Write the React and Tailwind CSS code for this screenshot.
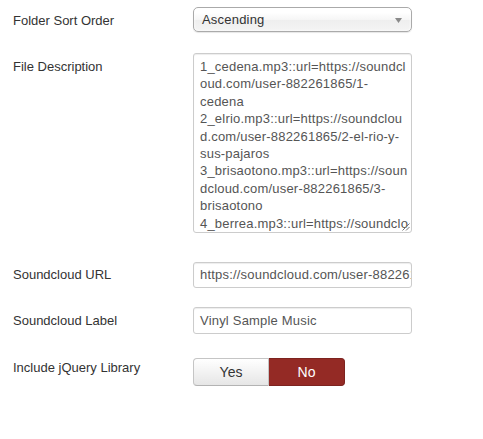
import React from "react";

const lines = [
  "1_cedena.mp3::url=https://soundcl",
  "oud.com/user-882261865/1-",
  "cedena",
  "2_elrio.mp3::url=https://soundclou",
  "d.com/user-882261865/2-el-rio-y-",
  "sus-pajaros",
  "3_brisaotono.mp3::url=https://soun",
  "dcloud.com/user-882261865/3-",
  "brisaotono",
  "4_berrea.mp3::url=https://soundclo",
  "ud.com/user-882261865/4-berrea",
];

function Label({ children, pt }) {
  return (
    <div className={`w-[180px] shrink-0 text-[13px] leading-[18px] text-[#333] ${pt}`}>
      {children}
    </div>
  );
}

export default function App() {
  return (
    <div
      className="w-[483px] h-[439px] bg-white pl-[13px] text-[13px] leading-[18px]"
      style={{ fontFamily: '"Liberation Sans", Arial, sans-serif' }}
    >
      <div className="pt-[7px]">
        {/* Row 1 */}
        <div className="flex">
          <Label pt="pt-[5px]">Folder Sort Order</Label>
          <div className="relative w-[219px] h-[25px] rounded-[5px] border border-[#aaa] bg-[linear-gradient(to_bottom,#ffffff_20%,#f6f6f6_50%,#eeeeee_52%,#f4f4f4_100%)] shadow-[0_1px_1px_rgba(0,0,0,0.1),inset_0_0_3px_#fff] flex items-center pl-[8px] text-[#333] tracking-[0.2px]">
            <span>Ascending</span>
            <svg
              className="absolute right-[9px] top-[10px]"
              width="7"
              height="5"
              viewBox="0 0 7 5"
            >
              <path d="M0 0 L7 0 L3.5 5 Z" fill="#8a8a8a" />
            </svg>
          </div>
        </div>

        {/* Row 2 */}
        <div className="flex mt-[21px]">
          <Label pt="pt-[5px]">File Description</Label>
          <div className="relative w-[219px] h-[180px] overflow-hidden rounded-[3px] border border-[#ccc] shadow-[inset_0_1px_1px_rgba(0,0,0,0.075)] pl-[6px] pt-[4px] text-[#555] tracking-[0.2px] leading-[17.4px]">
            {lines.map((l, i) => (
              <div key={i} className="whitespace-pre">
                {l}
              </div>
            ))}
            <svg
              className="absolute right-[1px] bottom-[1px]"
              width="8"
              height="8"
              viewBox="0 0 8 8"
            >
              <path d="M7.5 0.5 L0.5 7.5 M7.5 4 L4 7.5" stroke="#777" strokeWidth="1" />
            </svg>
          </div>
        </div>

        {/* Row 3 */}
        <div className="flex mt-[29px]">
          <Label pt="pt-[4px]">Soundcloud URL</Label>
          <div className="w-[219px] h-[26px] overflow-hidden whitespace-nowrap rounded-[3px] border border-[#ccc] shadow-[inset_0_1px_1px_rgba(0,0,0,0.075)] px-[6px] flex items-center text-[#555] tracking-[0.2px]">
            https://soundcloud.com/user-882261865
          </div>
        </div>

        {/* Row 4 */}
        <div className="flex mt-[19px]">
          <Label pt="pt-[5px]">Soundcloud Label</Label>
          <div className="w-[219px] h-[27px] overflow-hidden whitespace-nowrap rounded-[3px] border border-[#ccc] shadow-[inset_0_1px_1px_rgba(0,0,0,0.075)] px-[6px] flex items-center text-[#555] tracking-[0.2px]">
            Vinyl Sample Music
          </div>
        </div>

        {/* Row 5 */}
        <div className="flex mt-[24px]">
          <Label pt="pt-[1px]">Include jQuery Library</Label>
          <div className="flex h-[28px]">
            <div className="w-[76px] h-full flex items-center justify-center rounded-l-[4px] border border-[#c5c5c5] border-b-[#b3b3b3] bg-[linear-gradient(to_bottom,#ffffff,#e6e6e6)] text-[#333] text-[14px]">
              Yes
            </div>
            <div className="w-[76px] h-full flex items-center justify-center rounded-r-[4px] border border-[#7d231f] border-l-0 bg-[#942a25] text-white text-[14px]">
              No
            </div>
          </div>
        </div>
      </div>
    </div>
  );
}
